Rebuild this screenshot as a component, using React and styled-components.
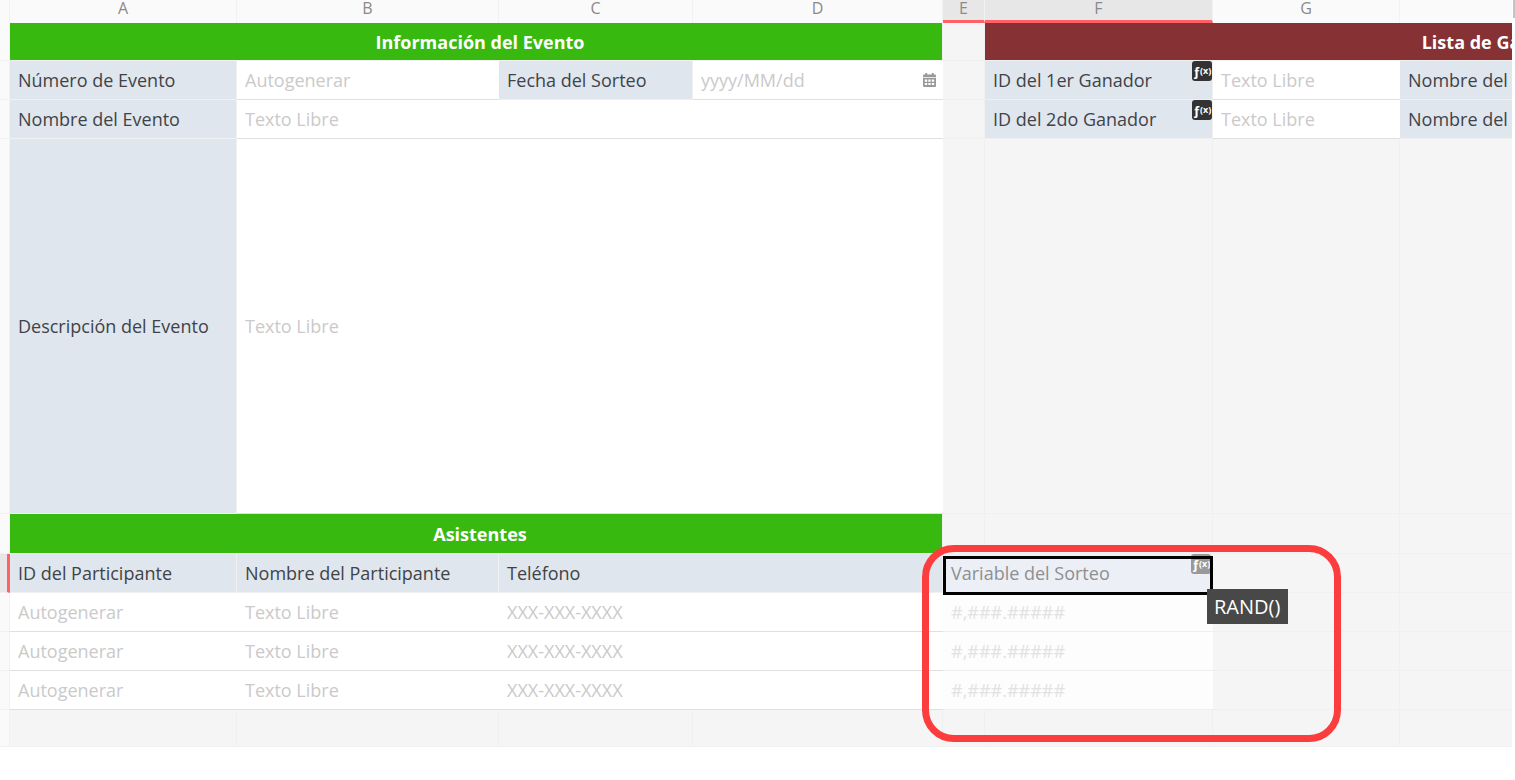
import React from "react";
import styled, { createGlobalStyle, css } from "styled-components";

const GlobalStyle = createGlobalStyle`
  * {
    box-sizing: border-box;
  }

  body {
    margin: 0;
    background: #fff;
    color: #3f4347;
    font-family: "Open Sans", "Noto Sans", sans-serif;
    font-size: 18px;
    line-height: 24px;
  }
`;

const Page = styled.main`
  display: flex;
  align-items: flex-start;
`;

const SheetView = styled.div`
  flex: 1;
  min-width: 0;
  overflow: hidden;
`;

const ScrollTrack = styled.div`
  flex: none;
  width: 3px;
  padding-left: 1px;
`;

const ScrollThumb = styled.div`
  height: 18px;
  background: #c4c4c4;
`;

const Sheet = styled.table`
  width: 100%;
  min-width: 2023px;
  table-layout: fixed;
  border-collapse: separate;
  border-spacing: 0;
  background: #f5f5f5;
`;

const Column = styled.col`
  width: ${(props) => props.$width}px;
`;

const Row = styled.tr`
  height: ${(props) => props.$height || 39}px;
`;

const ColumnHead = styled.th`
  padding: 0 0 4px;
  background: #fafafa;
  border-right: 1px solid #f2f2f2;
  color: #8a8a8a;
  font-size: 16px;
  font-weight: 400;
  line-height: 16px;
  vertical-align: top;

  ${(props) =>
    props.$active &&
    css`
      background: #e7e7e7;
      border-bottom: 3px solid #ff6166;
    `}
`;

const RowHead = styled.th`
  padding: 0;
  background: #fafafa;
  border-right: 1px solid #f2f2f2;
  border-bottom: 1px solid #f1f1f1;

  ${(props) =>
    props.$active &&
    css`
      background: #e7e7e7;
      border-right: 3px solid #ff6166;
    `}
`;

const EmptyCell = styled.td`
  padding: 0;
  border-right: 1px solid #f0f0f0;
  border-bottom: 1px solid #f0f0f0;
`;

const TitleCell = styled.th`
  padding: 0 0 0 8px;
  background: ${(props) => props.$color};
  border-right: 1px solid #f0f0f0;
  border-bottom: 1px solid #f0f0f0;
  color: #fff;
  font-weight: 700;
`;

const LabelCell = styled.th`
  position: relative;
  padding: 0 8px;
  background: ${(props) => (props.$faded ? "#eceff5" : "#e0e6ee")};
  border-right: 1px solid #f0f0f0;
  border-bottom: 1px solid #f0f0f0;
  color: ${(props) => (props.$faded ? "#8d8f92" : "inherit")};
  font-weight: 400;
  text-align: left;
  white-space: nowrap;
`;

const FieldCell = styled.td`
  padding: 0;
  background: ${(props) => (props.$faded ? "#fdfdfd" : "#fff")};
  border-bottom: 1px solid ${(props) => (props.$faded ? "#eeeeee" : "#e0e0e0")};
`;

const FieldBox = styled.div`
  display: flex;
  align-items: center;
  padding: 0 7px 0 8px;
`;

const TextInput = styled.input`
  flex: 1;
  min-width: 0;
  height: 24px;
  padding: 0;
  border: 0;
  background: transparent;
  color: inherit;
  font: inherit;

  &::placeholder {
    color: ${(props) => (props.$faded ? "#e2e2e2" : "#cacaca")};
    opacity: 1;
  }
`;

const DateButton = styled.button`
  display: flex;
  padding: 0;
  border: 0;
  background: none;
  color: #999;
  cursor: pointer;
`;

const FormulaBadge = styled.span`
  position: absolute;
  top: 0;
  right: ${(props) => (props.$faded ? 1 : 0)}px;
  display: flex;
  align-items: center;
  justify-content: center;
  width: 20px;
  height: 20px;
  border-radius: 3px;
  background: ${(props) => (props.$faded ? "#999" : "#333")};
  color: #fff;
  font-size: 13px;
  font-weight: 700;
  line-height: 18px;

  small {
    font-size: 9px;
  }
`;

const Selection = styled.div`
  position: absolute;
  top: 2px;
  right: -1px;
  bottom: -3px;
  left: 0;
  border: 3px solid #000;
`;

const SelectionHandle = styled.div`
  position: absolute;
  right: -4px;
  bottom: -4px;
  width: 7px;
  height: 7px;
  border: 1px solid #444;
  background: #000;
`;

const Tooltip = styled.div`
  position: absolute;
  top: 35px;
  left: 264px;
  padding: 6px 8px 5px 7px;
  background: #484848;
  color: #fff;
  font-size: 20px;
`;

const Highlight = styled.div`
  position: absolute;
  top: -9px;
  left: -21px;
  width: 419px;
  height: 197px;
  border: 7px solid #fc3d3e;
  border-radius: 32px;
  pointer-events: none;
`;

const columns = [
  { name: "", width: 10 },
  { name: "A", width: 227 },
  { name: "B", width: 262 },
  { name: "C", width: 194 },
  { name: "D", width: 250 },
  { name: "E", width: 42, active: true },
  { name: "F", width: 228, active: true },
  { name: "G", width: 187 },
  { name: "", width: 623 },
];

const winners = ["1er", "2do"];
const participants = [1, 2, 3];

function CalendarIcon() {
  return (
    <svg width="13" height="14" viewBox="0 0 13 14" aria-hidden="true">
      <path
        fill="currentColor"
        fillRule="evenodd"
        d="M2.2 0h2v1.6h4.6V0h2v1.6H12a1 1 0 0 1 1 1v1.6H0V2.6a1 1 0 0 1 1-1h1.2zM0 4.9h13V13a1 1 0 0 1-1 1H1a1 1 0 0 1-1-1zM1.8 6.6v2.2h2.4V6.6zM5.3 6.6v2.2h2.4V6.6zM8.8 6.6v2.2h2.4V6.6zM1.8 9.9v2.2h2.4V9.9zM5.3 9.9v2.2h2.4V9.9zM8.8 9.9v2.2h2.4V9.9z"
      />
    </svg>
  );
}

function Formula({ faded }) {
  return (
    <FormulaBadge $faded={faded}>
      ƒ<small>(x)</small>
    </FormulaBadge>
  );
}

function Field({ id, label, placeholder, span, faded, date }) {
  return (
    <FieldCell colSpan={span} $faded={faded}>
      <FieldBox>
        <TextInput
          id={id}
          type="text"
          aria-label={label}
          placeholder={placeholder}
          $faded={faded}
        />
        {date && (
          <DateButton type="button" aria-label="Elegir fecha">
            <CalendarIcon />
          </DateButton>
        )}
      </FieldBox>
    </FieldCell>
  );
}

function Label({ id, children, formula }) {
  return (
    <LabelCell>
      <label htmlFor={id}>{children}</label>
      {formula && <Formula />}
    </LabelCell>
  );
}

function Empty({ count }) {
  return Array.from({ length: count }, (_, i) => <EmptyCell key={i} />);
}

function Winner({ place }) {
  return (
    <>
      <Label id={`id-${place}`} formula>
        ID del {place} Ganador
      </Label>
      <Field id={`id-${place}`} placeholder="Texto Libre" />
      <LabelCell>Nombre del {place} Ganador</LabelCell>
    </>
  );
}

function App() {
  return (
    <>
      <GlobalStyle />
      <Page>
        <SheetView>
          <Sheet>
            <colgroup>
              {columns.map((column, i) => (
                <Column key={i} $width={column.width} />
              ))}
            </colgroup>
            <thead>
              <Row $height={23}>
                {columns.map((column, i) => (
                  <ColumnHead key={i} $active={column.active}>
                    {column.name}
                  </ColumnHead>
                ))}
              </Row>
            </thead>
            <tbody>
              <Row $height={38}>
                <RowHead />
                <TitleCell colSpan={4} $color="#38b90f">
                  Información del Evento
                </TitleCell>
                <EmptyCell />
                <TitleCell colSpan={3} $color="#863133">
                  Lista de Ganadores
                </TitleCell>
              </Row>
              <Row>
                <RowHead />
                <Label id="numero">Número de Evento</Label>
                <Field id="numero" placeholder="Autogenerar" />
                <Label id="fecha">Fecha del Sorteo</Label>
                <Field id="fecha" placeholder="yyyy/MM/dd" date />
                <EmptyCell />
                <Winner place={winners[0]} />
              </Row>
              <Row>
                <RowHead />
                <Label id="nombre">Nombre del Evento</Label>
                <Field id="nombre" placeholder="Texto Libre" span={3} />
                <EmptyCell />
                <Winner place={winners[1]} />
              </Row>
              <Row $height={375}>
                <RowHead />
                <Label id="descripcion">Descripción del Evento</Label>
                <Field id="descripcion" placeholder="Texto Libre" span={3} />
                <Empty count={4} />
              </Row>
              <Row $height={40}>
                <RowHead />
                <TitleCell colSpan={4} $color="#38b90f">
                  Asistentes
                </TitleCell>
                <Empty count={4} />
              </Row>
              <Row>
                <RowHead $active />
                <LabelCell>ID del Participante</LabelCell>
                <LabelCell>Nombre del Participante</LabelCell>
                <LabelCell colSpan={2}>Teléfono</LabelCell>
                <LabelCell colSpan={2} $faded>
                  Variable del Sorteo
                  <Formula faded />
                  <Selection>
                    <SelectionHandle />
                  </Selection>
                  <Tooltip role="tooltip">RAND()</Tooltip>
                  <Highlight />
                </LabelCell>
                <Empty count={2} />
              </Row>
              {participants.map((n) => (
                <Row key={n}>
                  <RowHead />
                  <Field label={`ID del Participante ${n}`} placeholder="Autogenerar" />
                  <Field label={`Nombre del Participante ${n}`} placeholder="Texto Libre" />
                  <Field label={`Teléfono ${n}`} placeholder="XXX-XXX-XXXX" span={2} />
                  <Field
                    label={`Variable del Sorteo ${n}`}
                    placeholder="#,###.#####"
                    span={2}
                    faded
                  />
                  <Empty count={2} />
                </Row>
              ))}
              <Row $height={37}>
                <RowHead />
                <Empty count={8} />
              </Row>
            </tbody>
          </Sheet>
        </SheetView>
        <ScrollTrack>
          <ScrollThumb />
        </ScrollTrack>
      </Page>
    </>
  );
}

export default App;
